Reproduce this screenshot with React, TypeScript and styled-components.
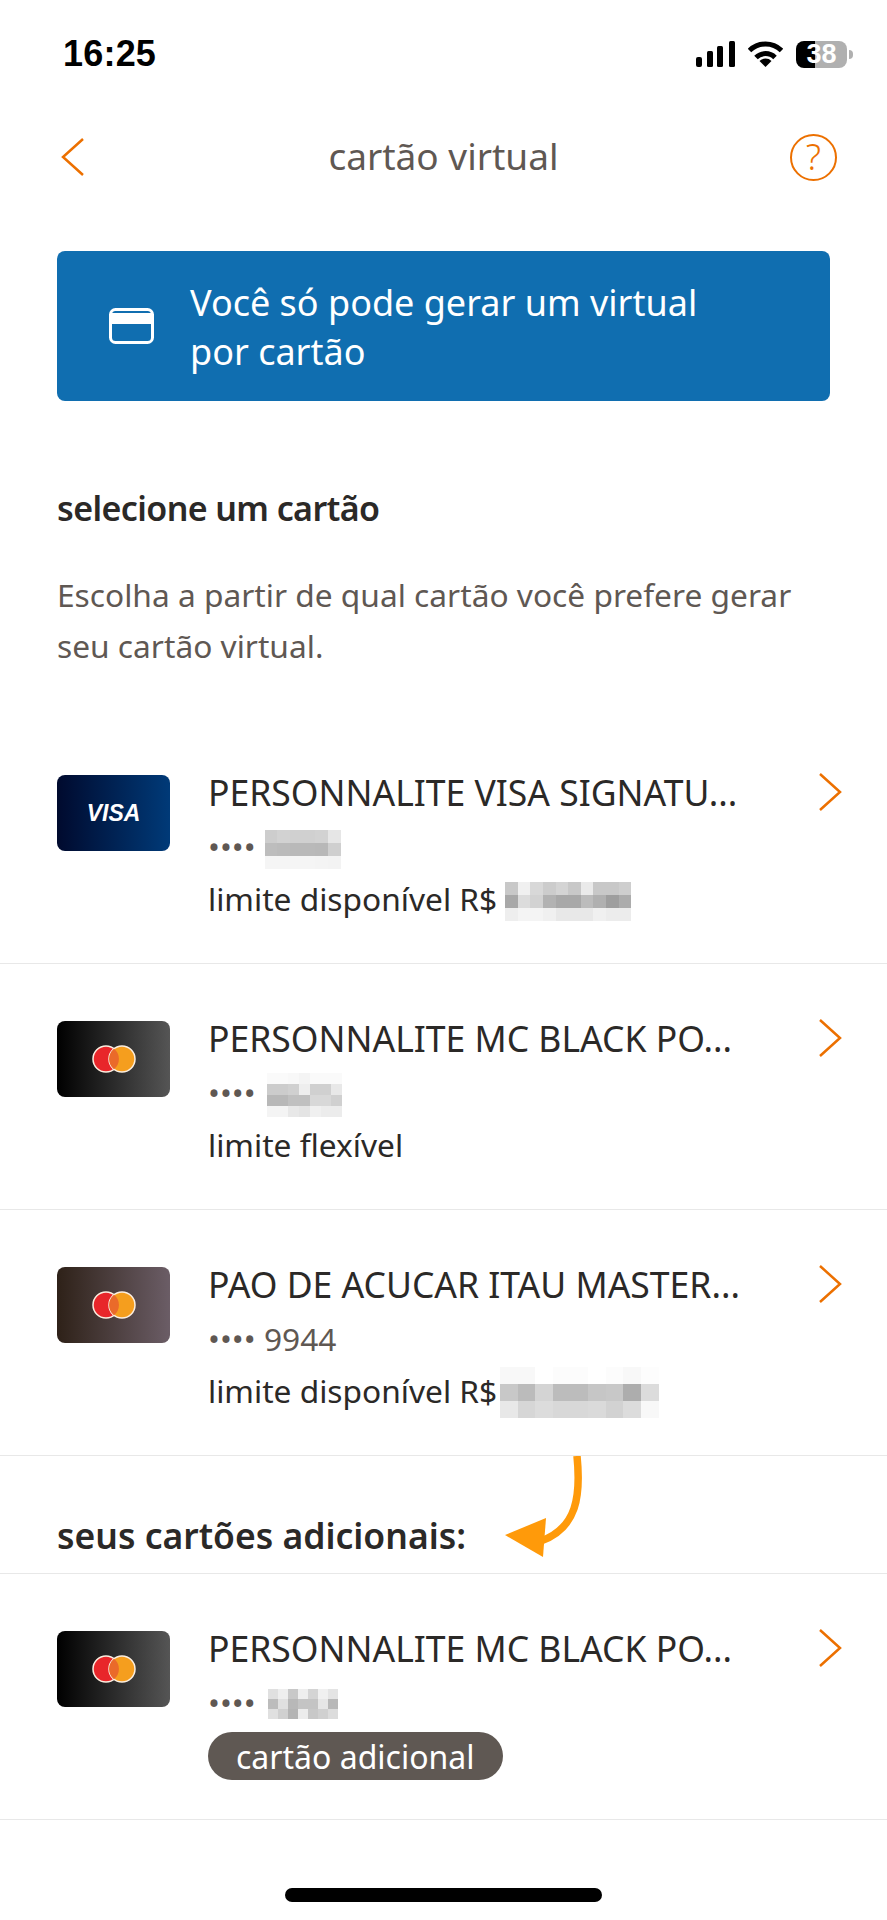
import React from 'react'
import styled, { createGlobalStyle } from 'styled-components'

const ORANGE = '#ec7000'
const TEXT = '#2b2927'
const MUTED = '#5f5853'
const FONT = '"Noto Sans", "Open Sans", sans-serif'

type PixelData = {
  cellWidth: number
  cellHeight: number
  tones: string[][]
  gap: number
  shift: number
}

type CardBrand = 'visa' | 'black' | 'brown'

type CardItem = {
  name: string
  brand: CardBrand
  digits?: string
  digitsBlock?: PixelData
  limit?: string
  limitBlock?: PixelData
  chip?: string
}

const toTones = (rows: string[]) => rows.map((row) => row.split(' ').map((v) => `#${v}${v}${v}`))

const cards: CardItem[] = [
  {
    name: 'PERSONNALITE VISA SIGNATU...',
    brand: 'visa',
    digitsBlock: {
      cellWidth: 12.7,
      cellHeight: 13,
      gap: 9,
      shift: 6,
      tones: toTones(['cd d2 d0 d0 d2 e6', 'bd bb b9 b9 b8 cf', 'f5 f5 f5 f5 f4 f3']),
    },
    limit: 'limite disponível R$',
    limitBlock: {
      cellWidth: 12.6,
      cellHeight: 13,
      gap: 8,
      shift: 6,
      tones: toTones([
        'c8 f0 d8 cc d4 c8 ea c8 c8 ce',
        'a8 dc d2 b2 a8 a8 bc b0 9e ac',
        'ee f4 f4 f0 e8 e8 e8 f0 ec ec',
      ]),
    },
  },
  {
    name: 'PERSONNALITE MC BLACK PO...',
    brand: 'black',
    digitsBlock: {
      cellWidth: 10.8,
      cellHeight: 10.8,
      gap: 11,
      shift: 6,
      tones: toTones([
        'fa fa f8 f4 fa fa fa',
        'cc cc d0 ee d0 d0 e8',
        'b8 b8 c0 c0 d8 d8 d0',
        'f4 f4 e8 e4 f0 ec ec',
      ]),
    },
    limit: 'limite flexível',
  },
  {
    name: 'PAO DE ACUCAR ITAU MASTER...',
    brand: 'brown',
    digits: '9944',
    limit: 'limite disponível R$',
    limitBlock: {
      cellWidth: 17.6,
      cellHeight: 17,
      gap: 3,
      shift: 4,
      tones: toTones([
        'f8 f8 ff fc fc ff fc f8 fd',
        'c8 bb d4 bc bc c6 c8 ad dc',
        'e8 d6 dc d8 d8 da d2 dc f8',
      ]),
    },
  },
  {
    name: 'PERSONNALITE MC BLACK PO...',
    brand: 'black',
    digitsBlock: {
      cellWidth: 10,
      cellHeight: 10,
      gap: 12,
      shift: 4,
      tones: toTones([
        'e0 ee c8 ee d4 f0 e4',
        'bc e0 b8 c4 c4 e6 b8',
        'e0 d0 b4 ec c8 d0 dc',
      ]),
    },
    chip: 'cartão adicional',
  },
]

const GlobalStyle = createGlobalStyle`
  body {
    margin: 0;
    background: #fff;
    font-family: ${FONT};
  }
`

const Screen = styled.div`
  width: 887px;
  height: 1920px;
  overflow: hidden;
  background: #fff;
`

const StatusBar = styled.div`
  height: 108px;
  padding: 0 40px 0 63px;
  box-sizing: border-box;
  display: flex;
  align-items: center;
  justify-content: space-between;
`

const Clock = styled.span`
  font-family: 'Liberation Sans', Arial, sans-serif;
  font-weight: 700;
  font-size: 36px;
  letter-spacing: 0.2px;
  color: #000;
`

const StatusIcons = styled.div`
  display: flex;
  align-items: center;
  gap: 13px;
`

const Battery = styled.div`
  position: relative;
  width: 51px;
  height: 27px;
  border-radius: 8px;
  background: linear-gradient(90deg, #000 38%, #b0b0b0 38%);
  display: flex;
  align-items: center;
  justify-content: center;
  font-family: 'Liberation Sans', Arial, sans-serif;
  font-weight: 700;
  font-size: 27px;
  color: #fff;

  &::after {
    content: '';
    position: absolute;
    right: -6px;
    top: 9px;
    width: 4px;
    height: 9px;
    border-radius: 0 4px 4px 0;
    background: #b0b0b0;
  }
`

const NavBar = styled.div`
  height: 98px;
  padding: 0 50px;
  display: grid;
  grid-template-columns: 1fr auto 1fr;
  align-items: center;
`

const BackLink = styled.div`
  display: flex;
  margin-left: 11px;
`

const NavTitle = styled.h1`
  margin: 0 0 4px;
  font-weight: 400;
  font-size: 37px;
  color: ${MUTED};
`

const HelpButton = styled.div`
  justify-self: end;
  width: 47px;
  height: 47px;
  box-sizing: border-box;
  border: 2.5px solid ${ORANGE};
  border-radius: 50%;
  display: flex;
  align-items: center;
  justify-content: center;
  font-size: 36px;
  font-weight: 300;
  line-height: 1;
  color: ${ORANGE};
`

const Banner = styled.div`
  margin: 45px 57px 0;
  height: 150px;
  padding-left: 52px;
  border-radius: 8px;
  background: #106eb0;
  display: flex;
  align-items: center;
  gap: 36px;
  color: #fff;
`

const BannerText = styled.p`
  margin: 2px 0 0;
  font-size: 36px;
  line-height: 49px;
`

const Intro = styled.section`
  padding: 84px 57px 0;
  height: 233px;
  box-sizing: content-box;
`

const Heading = styled.h2`
  margin: 0;
  font-size: 34px;
  line-height: 46px;
  font-weight: 600;
  letter-spacing: -0.6px;
  color: ${TEXT};
`

const Description = styled.p`
  margin: 38px 0 0;
  font-size: 31.7px;
  line-height: 51px;
  color: ${MUTED};
`

const Row = styled.div`
  height: 246px;
  box-sizing: border-box;
  padding: 50px 45px 0 57px;
  border-bottom: 1px solid #e8e8e8;
  display: flex;
  align-items: flex-start;
`

const brandGradients: Record<CardBrand, string> = {
  visa: 'linear-gradient(90deg, #000a2e, #003a78)',
  black: 'linear-gradient(90deg, #000, #555)',
  brown: 'linear-gradient(90deg, #2e2118, #6b5d66)',
}

const CardThumb = styled.div<{ $brand: CardBrand }>`
  flex: none;
  width: 113px;
  height: 76px;
  margin-top: 7px;
  border-radius: 8px;
  background: ${(p) => brandGradients[p.$brand]};
  display: flex;
  align-items: center;
  justify-content: center;
`

const VisaMark = styled.span`
  font-family: 'Liberation Sans', Arial, sans-serif;
  font-style: italic;
  font-weight: 700;
  font-size: 23px;
  color: #fff;
`

const RowBody = styled.div`
  flex: 1;
  margin-left: 38px;
`

const CardName = styled.div`
  margin-bottom: 4px;
  font-size: 35.5px;
  line-height: 48px;
  color: ${TEXT};
  white-space: nowrap;
`

const DetailLine = styled.div<{ $muted?: boolean }>`
  height: 52px;
  display: flex;
  align-items: center;
  font-size: 31.7px;
  color: ${(p) => (p.$muted ? MUTED : TEXT)};
  white-space: nowrap;
`

const Chip = styled.span`
  margin-top: 4px;
  height: 48px;
  padding: 0 28px;
  border-radius: 24px;
  background: #5f5853;
  display: inline-flex;
  align-items: center;
  font-size: 32px;
  color: #fff;
`

const PixelGrid = styled.div<{ $cols: number; $w: number; $h: number; $gap: number; $shift: number }>`
  margin-left: ${(p) => p.$gap}px;
  margin-top: ${(p) => p.$shift}px;
  display: grid;
  grid-template-columns: repeat(${(p) => p.$cols}, ${(p) => p.$w}px);
  grid-auto-rows: ${(p) => p.$h}px;
  filter: blur(0.7px);
`

const Pixel = styled.i<{ $tone: string }>`
  background: ${(p) => p.$tone};
`

const Chevron = styled.div`
  flex: none;
  margin-top: 4px;
  display: flex;
`

const SectionHeader = styled.div`
  position: relative;
  height: 118px;
  box-sizing: border-box;
  padding: 0 57px 13px;
  border-bottom: 1px solid #e8e8e8;
  display: flex;
  align-items: flex-end;
  font-size: 35.5px;
  line-height: 50px;
  font-weight: 600;
  color: ${TEXT};
`

const CurvedArrow = styled.svg`
  position: absolute;
  left: 500px;
  top: 0;
`

const HomeIndicator = styled.div`
  width: 317px;
  height: 14px;
  margin: 68px auto 0;
  border-radius: 7px;
  background: #000;
`

function PixelBlock({ data }: { data: PixelData }) {
  return (
    <PixelGrid
      $cols={data.tones[0].length}
      $w={data.cellWidth}
      $h={data.cellHeight}
      $gap={data.gap}
      $shift={data.shift}
    >
      {data.tones.flat().map((tone, i) => (
        <Pixel key={i} $tone={tone} />
      ))}
    </PixelGrid>
  )
}

function MastercardMark() {
  return (
    <svg width="44" height="28" viewBox="0 0 44 28">
      <circle cx="14" cy="14" r="13" fill="#e8262a" stroke="#fbeee0" strokeWidth="1.5" />
      <circle cx="30" cy="14" r="13" fill="#f59e1e" stroke="#fbeee0" strokeWidth="1.5" />
      <path d="M22 3.8a13 13 0 0 1 0 20.4a13 13 0 0 1 0-20.4z" fill="#ea6a2a" />
    </svg>
  )
}

function CardRow({ card }: { card: CardItem }) {
  return (
    <Row>
      <CardThumb $brand={card.brand}>
        {card.brand === 'visa' ? <VisaMark>VISA</VisaMark> : <MastercardMark />}
      </CardThumb>
      <RowBody>
        <CardName>{card.name}</CardName>
        <DetailLine $muted>
          ••••{card.digits ? ` ${card.digits}` : ''}
          {card.digitsBlock && <PixelBlock data={card.digitsBlock} />}
        </DetailLine>
        {card.limit && (
          <DetailLine>
            {card.limit}
            {card.limitBlock && <PixelBlock data={card.limitBlock} />}
          </DetailLine>
        )}
        {card.chip && <Chip>{card.chip}</Chip>}
      </RowBody>
      <Chevron>
        <svg width="24" height="40" viewBox="0 0 24 40" fill="none">
          <path d="M2 2l20 18L2 38" stroke={ORANGE} strokeWidth="2.5" />
        </svg>
      </Chevron>
    </Row>
  )
}

export default function App() {
  return (
    <Screen>
      <GlobalStyle />
      <StatusBar>
        <Clock>16:25</Clock>
        <StatusIcons>
          <svg width="39" height="26" viewBox="0 0 39 26" fill="#000">
            <rect x="0" y="16" width="6" height="10" rx="2" />
            <rect x="11" y="10" width="6" height="16" rx="1.5" />
            <rect x="21" y="5" width="6" height="21" rx="1.5" />
            <rect x="33" y="0" width="6" height="26" rx="1.5" />
          </svg>
          <svg width="35" height="26" viewBox="0 0 35 26" fill="none">
            <path d="M1.5 9.5a23 23 0 0 1 32 0" stroke="#000" strokeWidth="5" />
            <path d="M8 16.5a13.5 13.5 0 0 1 19 0" stroke="#000" strokeWidth="5" />
            <path d="M17.5 26l-6-6a8.5 8.5 0 0 1 12 0z" fill="#000" />
          </svg>
          <Battery>38</Battery>
        </StatusIcons>
      </StatusBar>

      <NavBar>
        <BackLink>
          <svg width="24" height="40" viewBox="0 0 24 40" fill="none">
            <path d="M22 2L2 20l20 18" stroke={ORANGE} strokeWidth="2.5" />
          </svg>
        </BackLink>
        <NavTitle>cartão virtual</NavTitle>
        <HelpButton>?</HelpButton>
      </NavBar>

      <Banner>
        <svg width="45" height="36" viewBox="0 0 45 36" fill="none">
          <rect x="1.5" y="1.5" width="42" height="33" rx="5" stroke="#fff" strokeWidth="3" />
          <rect x="1.5" y="5" width="42" height="11" fill="#fff" />
        </svg>
        <BannerText>
          Você só pode gerar um virtual
          <br />
          por cartão
        </BannerText>
      </Banner>

      <Intro>
        <Heading>selecione um cartão</Heading>
        <Description>
          Escolha a partir de qual cartão você prefere gerar
          <br />
          seu cartão virtual.
        </Description>
      </Intro>

      <CardRow card={cards[0]} />
      <CardRow card={cards[1]} />
      <CardRow card={cards[2]} />

      <SectionHeader>
        seus cartões adicionais:
        <CurvedArrow width="90" height="118" viewBox="0 0 90 118" fill="none">
          <path d="M77 0c4 40 0 72-36 85" stroke="#ff9a0a" strokeWidth="7.5" />
          <path d="M5 79L46 62l-3 39z" fill="#ff9a0a" />
        </CurvedArrow>
      </SectionHeader>

      <CardRow card={cards[3]} />

      <HomeIndicator />
    </Screen>
  )
}
